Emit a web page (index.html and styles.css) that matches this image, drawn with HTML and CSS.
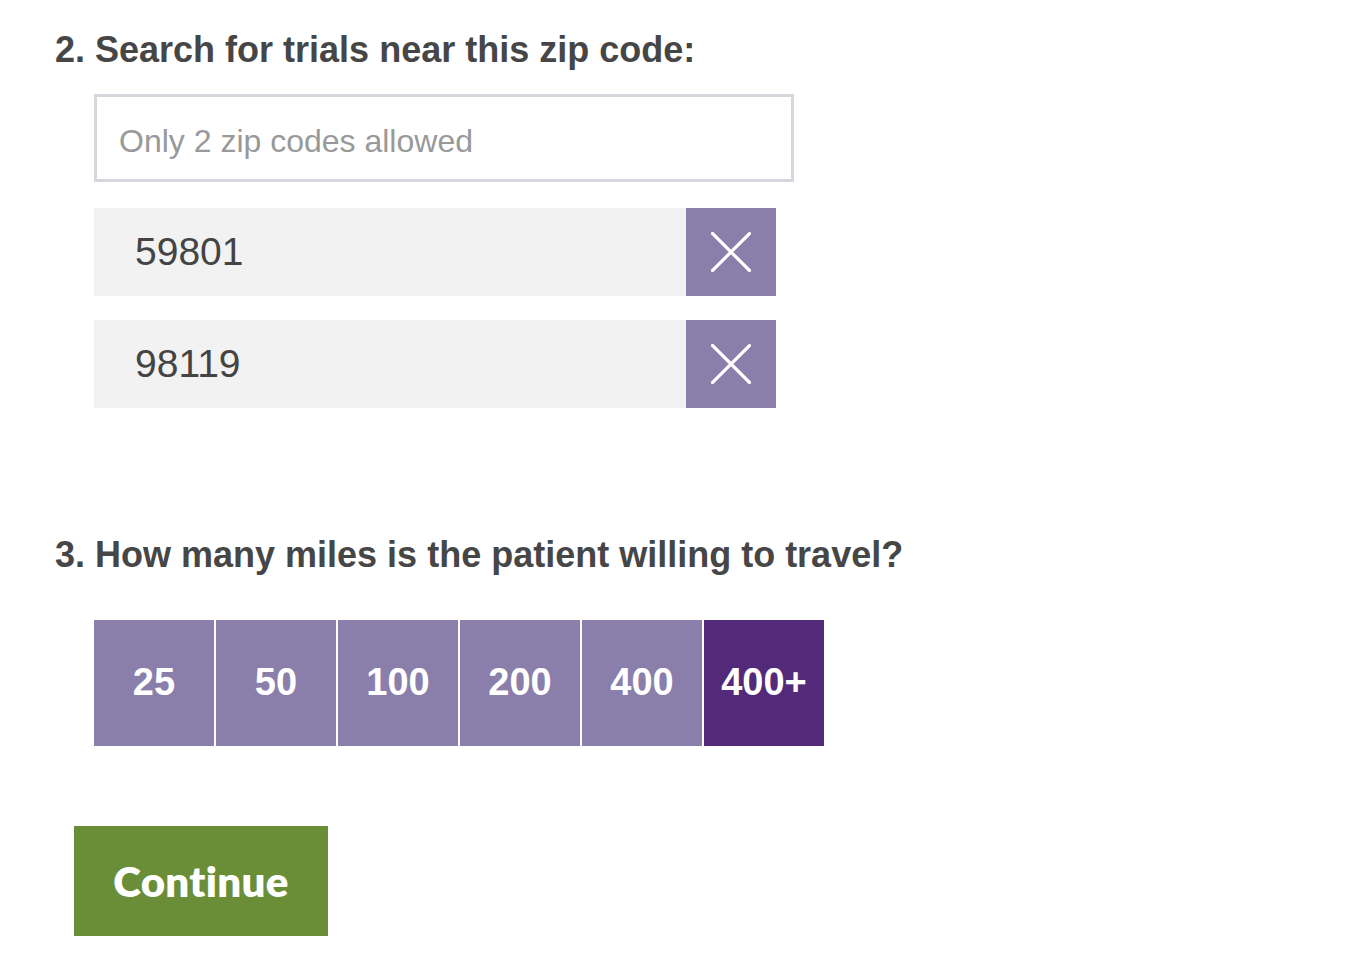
FILE: index.html
```html
<!DOCTYPE html>
<html lang="en">
<head>
<meta charset="utf-8">
<title>Trial search</title>
<link rel="stylesheet" href="styles.css">
</head>
<body>
<main class="page">
  <section class="step">
    <h2 class="step-title">2. Search for trials near this zip code:</h2>
    <div class="step-body">
      <input class="zip-input" type="text" placeholder="Only 2 zip codes allowed">
      <ul class="zip-list">
        <li class="zip-item">
          <span class="zip-value">59801</span>
          <button class="zip-remove" type="button" aria-label="Remove 59801">
            <svg viewBox="0 0 40 40" width="40" height="40"><path d="M1.5 1.5 L38.5 38.5 M38.5 1.5 L1.5 38.5" stroke="#fff" stroke-width="3.2" stroke-linecap="square" fill="none"/></svg>
          </button>
        </li>
        <li class="zip-item">
          <span class="zip-value">98119</span>
          <button class="zip-remove" type="button" aria-label="Remove 98119">
            <svg viewBox="0 0 40 40" width="40" height="40"><path d="M1.5 1.5 L38.5 38.5 M38.5 1.5 L1.5 38.5" stroke="#fff" stroke-width="3.2" stroke-linecap="square" fill="none"/></svg>
          </button>
        </li>
      </ul>
    </div>
  </section>

  <section class="step step-miles">
    <h2 class="step-title">3. How many miles is the patient willing to travel?</h2>
    <div class="step-body">
      <div class="miles">
        <button class="mile" type="button">25</button>
        <button class="mile" type="button">50</button>
        <button class="mile" type="button">100</button>
        <button class="mile" type="button">200</button>
        <button class="mile" type="button">400</button>
        <button class="mile is-active" type="button">400+</button>
      </div>
    </div>
  </section>

  <div class="actions">
    <button class="continue" type="button">Continue</button>
  </div>
</main>
</body>
</html>
```

FILE: styles.css
```css
* { box-sizing: border-box; }

html, body {
  margin: 0;
  padding: 0;
  background: #fff;
}

body {
  font-family: "Liberation Sans", Arial, Helvetica, sans-serif;
  color: #444;
}

.page {
  padding: 30px 0 0 55px;
}

.step-title {
  margin: 0;
  font-size: 36px;
  line-height: 40px;
  font-weight: 700;
  color: #464646;
}

.step-body {
  padding-left: 39px;
}

.zip-input {
  display: block;
  margin-top: 24px;
  width: 700px;
  height: 88px;
  border: 3px solid #d6d6dd;
  background: #fff;
  padding: 6px 0 0 22px;
  font-family: "Liberation Sans", Arial, sans-serif;
  font-size: 32px;
  color: #444;
  outline: none;
}

.zip-input::placeholder {
  color: #999;
}

.zip-list {
  list-style: none;
  margin: 26px 0 0;
  padding: 0;
  display: flex;
  flex-direction: column;
  gap: 24px;
}

.zip-item {
  display: flex;
  width: 682px;
  height: 88px;
  background: #f2f2f2;
}

.zip-value {
  flex: 1;
  display: flex;
  align-items: center;
  padding: 0 0 0 41px;
  font-size: 39px;
  color: #444;
}

.zip-remove {
  width: 90px;
  height: 88px;
  border: 0;
  padding: 0;
  margin: 0;
  background: #8a7eab;
  display: flex;
  align-items: center;
  justify-content: center;
  cursor: pointer;
}

.zip-remove svg {
  display: block;
}

.step-miles {
  margin-top: 127px;
}

.miles {
  margin-top: 45px;
  display: flex;
  gap: 2px;
}

.mile {
  width: 120px;
  height: 126px;
  border: 0;
  margin: 0;
  padding: 0 0 1px;
  background: #8a7eab;
  color: #fff;
  font-family: "Liberation Sans", Arial, sans-serif;
  font-weight: 700;
  font-size: 38px;
  cursor: pointer;
}

.mile.is-active {
  background: #53297a;
}

.actions {
  margin-top: 80px;
  padding-left: 19px;
}

.continue {
  width: 254px;
  height: 110px;
  border: 0;
  margin: 0;
  padding: 0;
  background: #6a8e37;
  color: #fff;
  font-family: Lato, "Noto Sans", sans-serif;
  font-weight: 800;
  font-size: 42px;
  letter-spacing: 0.3px;
  cursor: pointer;
}
```
